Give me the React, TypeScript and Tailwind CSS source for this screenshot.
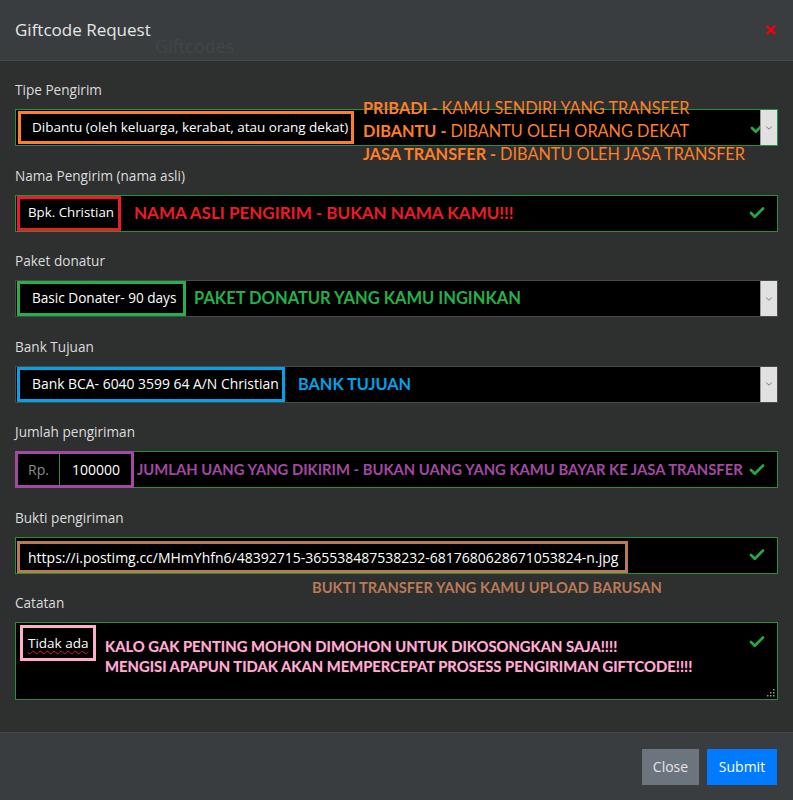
import { Check, ChevronDown, X } from "lucide-react";
import type { ReactNode } from "react";

const NOTE = "font-['Lato',sans-serif] font-bold";

function Label({ children }: { children: ReactNode }) {
  return <div className="mb-[9px] h-5 text-[13.6px] leading-5 text-[#dcdcdc]">{children}</div>;
}

function Field({ label, children }: { label: string; children: ReactNode }) {
  return (
    <div className="mb-[19.5px]">
      <Label>{label}</Label>
      {children}
    </div>
  );
}

function Valid() {
  return <Check className="h-[18px] w-[18px] shrink-0 text-[#28a745]" strokeWidth={3.5} />;
}

function Caret() {
  return (
    <div className="flex h-full w-[17px] shrink-0 items-center justify-center border-l border-[#9a9a9a] bg-[#e1e1e1]">
      <ChevronDown className="h-[10px] w-[10px] text-[#666]" strokeWidth={2} />
    </div>
  );
}

export default function App() {
  return (
    <div className="flex h-[800px] w-[793px] flex-col bg-[#2e2f2f] font-['Open_Sans',sans-serif] text-white">
      <div className="relative flex h-[61px] items-center justify-between border-b border-[#46494b] bg-[#3a3d3f] pl-[15px] pr-[15px]">
        <span className="text-[17px] text-[#e6e6e6]">Giftcode Request</span>
        <span className="absolute left-[155px] top-[33px] text-[18px] text-[#424547]">Giftcodes</span>
        <X className="h-[14px] w-[14px] text-[#ff0000]" strokeWidth={4} />
      </div>

      <div className="flex-1 px-[15px] pt-[19px]">
        <Field label="Tipe Pengirim">
          <div className="relative flex h-[37px] items-center border border-[#25913d] bg-black">
            <div className="ml-[2px] flex h-[33px] w-[336px] items-center border-[3px] border-[#ff7f27] pl-[11px] text-[13.5px]">
              Dibantu (oleh keluarga, kerabat, atau orang dekat)
            </div>
            <div className="ml-auto -mr-[7px]">
              <Valid />
            </div>
            <Caret />
            <div className={`absolute left-[347px] top-[-14px] text-[16.3px] leading-[23px] text-[#ff7f27] ${NOTE}`}>
              <div>PRIBADI - <span className="font-normal">KAMU SENDIRI YANG TRANSFER</span></div>
              <div>DIBANTU - <span className="font-normal">DIBANTU OLEH ORANG DEKAT</span></div>
              <div>JASA TRANSFER - <span className="font-normal">DIBANTU OLEH JASA TRANSFER</span></div>
            </div>
          </div>
        </Field>

        <Field label="Nama Pengirim (nama asli)">
          <div className="flex h-[37px] items-center border border-[#25913d] bg-black pr-[11px]">
            <div className="ml-[1px] flex h-[35px] w-[104px] items-center border-[3px] border-[#ed1c24] pl-[8px] text-[13.3px]">
              Bpk. Christian
            </div>
            <span className={`ml-[13px] text-[17px] text-[#ed1c24] ${NOTE}`}>NAMA ASLI PENGIRIM - BUKAN NAMA KAMU!!!</span>
            <div className="ml-auto">
              <Valid />
            </div>
          </div>
        </Field>

        <Field label="Paket donatur">
          <div className="flex h-[37px] items-center border border-[#4a4a4a] bg-black">
            <div className="ml-[1px] flex h-[35px] w-[169px] items-center border-[3px] border-[#22b14c] pl-[12px] text-[13.6px]">
              Basic Donater- 90 days
            </div>
            <span className={`ml-[8px] text-[16.5px] text-[#22b14c] ${NOTE}`}>PAKET DONATUR YANG KAMU INGINKAN</span>
            <div className="ml-auto h-full">
              <Caret />
            </div>
          </div>
        </Field>

        <Field label="Bank Tujuan">
          <div className="flex h-[37px] items-center border border-[#4a4a4a] bg-black">
            <div className="ml-[1px] flex h-[35px] w-[268px] items-center border-[3px] border-[#00a2e8] pl-[12px] text-[13.9px]">
              Bank BCA- 6040 3599 64 A/N Christian
            </div>
            <span className={`ml-[13px] text-[16.3px] text-[#00a2e8] ${NOTE}`}>BANK TUJUAN</span>
            <div className="ml-auto h-full">
              <Caret />
            </div>
          </div>
        </Field>

        <Field label="Jumlah pengiriman">
          <div className="flex h-[37px] items-center border border-[#25913d] bg-black pr-[11px]">
            <div className="-ml-[1px] flex h-[37px] w-[119px] items-center border-[3px] border-[#a349a4] text-[14px]">
              <div className="flex h-full w-[42px] items-center justify-center border-r border-[#25913d] text-[#8a8a8a]">Rp.</div>
              <span className="ml-[12px]">100000</span>
            </div>
            <span className={`ml-[3px] text-[14.8px] text-[#a349a4] ${NOTE}`}>
              JUMLAH UANG YANG DIKIRIM - BUKAN UANG YANG KAMU BAYAR KE JASA TRANSFER
            </span>
            <div className="ml-auto">
              <Valid />
            </div>
          </div>
        </Field>

        <Field label="Bukti pengiriman">
          <div className="relative flex h-[37px] items-center border border-[#25913d] bg-black pr-[11px]">
            <div className="ml-[1px] mt-[4px] flex h-[32px] w-[611px] items-center border-[3px] border-[#b97a57] pl-[8px] text-[14px]">
              https://i.postimg.cc/MHmYhfn6/48392715-365538487538232-6817680628671053824-n.jpg
            </div>
            <div className="ml-auto">
              <Valid />
            </div>
            <span className={`absolute left-[296px] top-[41px] text-[14.7px] leading-4 text-[#b97a57] ${NOTE}`}>
              BUKTI TRANSFER YANG KAMU UPLOAD BARUSAN
            </span>
          </div>
        </Field>

        <div>
          <Label>Catatan</Label>
          <div className="relative flex h-[78px] items-start border border-[#25913d] bg-black pr-[11px]">
            <div className="ml-[4px] mt-[2px] flex h-[36px] w-[76px] items-center border-[3px] border-[#ffaec9] pl-[5px] text-[13.5px]">
              <span className="underline decoration-[#e0201c] decoration-wavy decoration-1 underline-offset-2">Tidak ada</span>
            </div>
            <div className={`ml-[9px] mt-[13px] text-[14.8px] leading-5 text-[#ffaec9] [text-shadow:0_0_1px_#7a3a8a] ${NOTE}`}>
              <div>KALO GAK PENTING MOHON DIMOHON UNTUK DIKOSONGKAN SAJA!!!!</div>
              <div>MENGISI APAPUN TIDAK AKAN MEMPERCEPAT PROSESS PENGIRIMAN GIFTCODE!!!!</div>
            </div>
            <div className="ml-auto mt-[10px]">
              <Valid />
            </div>
            <svg className="absolute bottom-[2px] right-[2px]" width="8" height="8" viewBox="0 0 8 8">
              <g fill="#9a9a9a">
                <rect x="6" y="0" width="1.5" height="1.5" />
                <rect x="3" y="3" width="1.5" height="1.5" />
                <rect x="6" y="3" width="1.5" height="1.5" />
                <rect x="0" y="6" width="1.5" height="1.5" />
                <rect x="3" y="6" width="1.5" height="1.5" />
                <rect x="6" y="6" width="1.5" height="1.5" />
              </g>
            </svg>
          </div>
        </div>
      </div>

      <div className="flex h-[68px] items-center justify-end gap-2 border-t border-[#46494b] bg-[#3a3d3f] pr-[16px]">
        <button type="button" className="h-9 w-[57px] border border-[#6c757d] bg-[#6c757d] text-[14px] text-[#e4e4e4]">
          Close
        </button>
        <button type="button" className="h-9 w-[70px] border border-[#007bff] bg-[#007bff] text-[14px] text-white">
          Submit
        </button>
      </div>
    </div>
  );
}
